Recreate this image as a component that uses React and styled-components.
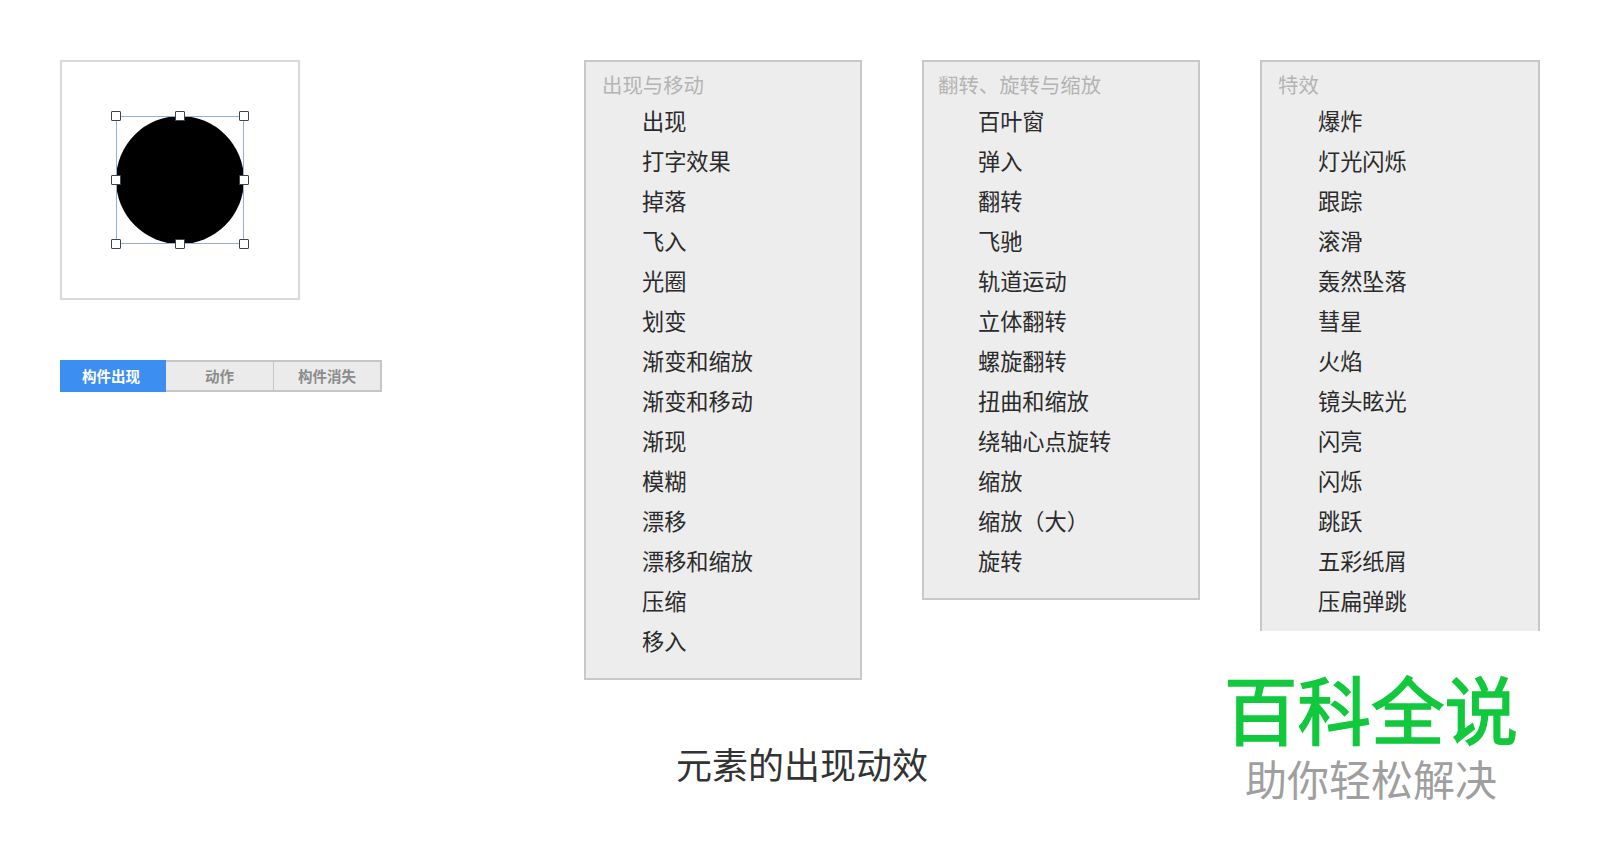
import React from 'react';
import styled, { createGlobalStyle } from 'styled-components';

const GlobalStyle = createGlobalStyle`
  html, body {
    margin: 0;
    padding: 0;
    background: #fff;
  }
  body {
    font-family: "Noto Sans CJK SC", "Liberation Sans", sans-serif;
  }
`;

const Page = styled.div`
  display: flex;
  align-items: flex-start;
  box-sizing: border-box;
  width: 1600px;
  height: 850px;
  padding: 60px 0 0 60px;
  overflow: hidden;
`;

const LeftColumn = styled.div`
  width: 524px;
  flex: none;
`;

const Canvas = styled.div`
  display: flex;
  align-items: center;
  justify-content: center;
  box-sizing: border-box;
  width: 240px;
  height: 240px;
  border: 2px solid #d9d9d9;
`;

const Selection = styled.div`
  position: relative;
  width: 128px;
  height: 128px;
  outline: 1px solid #94aee4;
  outline-offset: -1px;
`;

const Circle = styled.div`
  width: 100%;
  height: 100%;
  border-radius: 50%;
  background: #000;
`;

const Handle = styled.span`
  position: absolute;
  box-sizing: border-box;
  width: 10px;
  height: 10px;
  margin: -5px 0 0 -5px;
  background: #fff;
  border: 1px solid #444;
  border-radius: 1px;
  left: ${({ $x }) => $x}%;
  top: ${({ $y }) => $y}%;
`;

const Tabs = styled.div`
  display: flex;
  width: 322px;
  height: 32px;
  margin-top: 60px;
`;

const Tab = styled.div`
  display: flex;
  align-items: center;
  justify-content: center;
  box-sizing: border-box;
  width: ${({ $width }) => $width}px;
  padding-right: ${({ $active }) => ($active ? 3 : 0)}px;
  padding-bottom: 1px;
  font-size: 14.5px;
  font-weight: 700;
  color: ${({ $active }) => ($active ? '#fff' : '#8c8c8c')};
  background: ${({ $active }) => ($active ? '#3c8ff0' : '#ebebeb')};
  border-style: solid;
  border-color: ${({ $active }) => ($active ? '#3c8ff0' : '#c6c6c6')};
  border-width: ${({ $last }) => ($last ? '2px 2px 2px 0' : '2px 1px 2px 0')};
`;

const MiddleColumn = styled.div`
  flex: none;
  width: 616px;
`;

const PanelRow = styled.div`
  display: flex;
  align-items: flex-start;
  gap: 60px;
`;

const Panel = styled.div`
  box-sizing: border-box;
  flex: none;
  width: ${({ $width }) => $width}px;
  padding: 2px 0 ${({ $bottom }) => $bottom}px;
  background: #ededed;
  border-style: solid;
  border-color: #c8c8c8;
  border-width: ${({ $open }) => ($open ? '2px 2px 0 2px' : '2px')};
`;

const PanelTitle = styled.div`
  height: 36px;
  padding-left: ${({ $indent }) => $indent}px;
  font-size: 20.4px;
  line-height: 40px;
  color: #b4b4b4;
`;

const PanelItem = styled.div`
  height: 40px;
  padding-left: ${({ $indent }) => $indent}px;
  font-size: 22.2px;
  line-height: 40px;
  color: #2a2a2a;
  white-space: nowrap;
`;

const Caption = styled.div`
  margin: 59px 0 0 92px;
  font-size: 36px;
  line-height: 48px;
  color: #333;
  white-space: nowrap;
`;

const RightColumn = styled.div`
  flex: none;
  width: 280px;
  margin-left: 60px;
`;

const Logo = styled.div`
  display: flex;
  flex-direction: column;
  align-items: center;
  width: 288px;
  margin: 39px 0 0 -33px;
`;

const LogoMain = styled.div`
  font-size: 73.5px;
  font-weight: 400;
  line-height: 74px;
  color: #12c83d;
  -webkit-text-stroke: 1.6px #12c83d;
  white-space: nowrap;
`;

const LogoSub = styled.div`
  margin-top: 11px;
  font-size: 42px;
  line-height: 46px;
  color: #9f9f9f;
  white-space: nowrap;
`;

const handles = [
  [0, 0], [50, 0], [100, 0],
  [0, 50], [100, 50],
  [0, 100], [50, 100], [100, 100],
];

const appear = ['出现', '打字效果', '掉落', '飞入', '光圈', '划变', '渐变和缩放', '渐变和移动', '渐现', '模糊', '漂移', '漂移和缩放', '压缩', '移入'];
const flip = ['百叶窗', '弹入', '翻转', '飞驰', '轨道运动', '立体翻转', '螺旋翻转', '扭曲和缩放', '绕轴心点旋转', '缩放', '缩放（大）', '旋转'];
const effects = ['爆炸', '灯光闪烁', '跟踪', '滚滑', '轰然坠落', '彗星', '火焰', '镜头眩光', '闪亮', '闪烁', '跳跃', '五彩纸屑', '压扁弹跳'];

const EffectPanel = ({ title, items, width, titleIndent, itemIndent, bottom, open }) => (
  <Panel $width={width} $bottom={bottom} $open={open}>
    <PanelTitle $indent={titleIndent}>{title}</PanelTitle>
    {items.map((item) => (
      <PanelItem key={item} $indent={itemIndent}>{item}</PanelItem>
    ))}
  </Panel>
);

const App = () => (
  <>
    <GlobalStyle />
    <Page>
      <LeftColumn>
        <Canvas>
          <Selection>
            <Circle />
            {handles.map(([x, y]) => (
              <Handle key={`${x}-${y}`} $x={x} $y={y} />
            ))}
          </Selection>
        </Canvas>
        <Tabs>
          <Tab $width={106} $active>构件出现</Tab>
          <Tab $width={108}>动作</Tab>
          <Tab $width={108} $last>构件消失</Tab>
        </Tabs>
      </LeftColumn>

      <MiddleColumn>
        <PanelRow>
          <EffectPanel title="出现与移动" items={appear} width={278} titleIndent={16} itemIndent={56} bottom={18} />
          <EffectPanel title="翻转、旋转与缩放" items={flip} width={278} titleIndent={14} itemIndent={54} bottom={18} />
        </PanelRow>
        <Caption>元素的出现动效</Caption>
      </MiddleColumn>

      <RightColumn>
        <EffectPanel title="特效" items={effects} width={280} titleIndent={16} itemIndent={56} bottom={11} open />
        <Logo>
          <LogoMain>百科全说</LogoMain>
          <LogoSub>助你轻松解决</LogoSub>
        </Logo>
      </RightColumn>
    </Page>
  </>
);

export default App;
